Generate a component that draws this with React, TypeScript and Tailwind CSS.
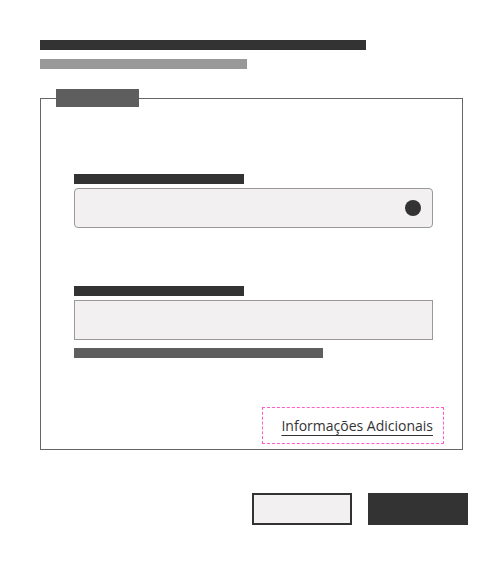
export default function App() {
  return (
    <div className="w-[503px] h-[564px] bg-white pt-[40px] pl-[40px] pr-[35px] font-['Open_Sans',sans-serif]">
      <div className="h-[10px] w-[326px] bg-[#333333]" />
      <div className="mt-[9px] h-[10px] w-[207px] bg-[#999999]" />

      <fieldset className="mt-[20px] w-[423px] h-[361px] border border-[#666666]">
        <legend className="ml-[15px] w-[83px] h-[18px] bg-[#5e5e5e]" />
        <div className="pl-[33px] pr-[29px] pt-[67px]">
          <div className="h-[10px] w-[170px] bg-[#333333]" />
          <div className="mt-[4px] h-[40px] rounded-[4px] border border-[#999999] bg-[#f2f0f1] flex items-center justify-end pr-[11px]">
            <div className="w-[16px] h-[16px] rounded-full bg-[#333333]" />
          </div>

          <div className="mt-[58px] h-[10px] w-[170px] bg-[#333333]" />
          <div className="mt-[4px] h-[40px] border border-[#999999] bg-[#f2f0f1]" />
          <div className="mt-[8px] h-[10px] w-[249px] bg-[#5e5e5e]" />
        </div>
        <div className="mt-[49px] flex justify-end pr-[18px]">
          <div className="h-[37px] flex items-center pl-[18px] pr-[10px] border border-dashed border-[#ff5ccc]">
            <span className="text-[14px] leading-none text-[#333333] underline underline-offset-[4px]">Informações Adicionais</span>
          </div>
        </div>
      </fieldset>

      <div className="mt-[43px] flex justify-end gap-[16px]">
        <div className="w-[100px] h-[32px] border-2 border-[#333333] bg-[#f2f0f1]" />
        <div className="w-[100px] h-[32px] bg-[#333333]" />
      </div>
    </div>
  );
}
